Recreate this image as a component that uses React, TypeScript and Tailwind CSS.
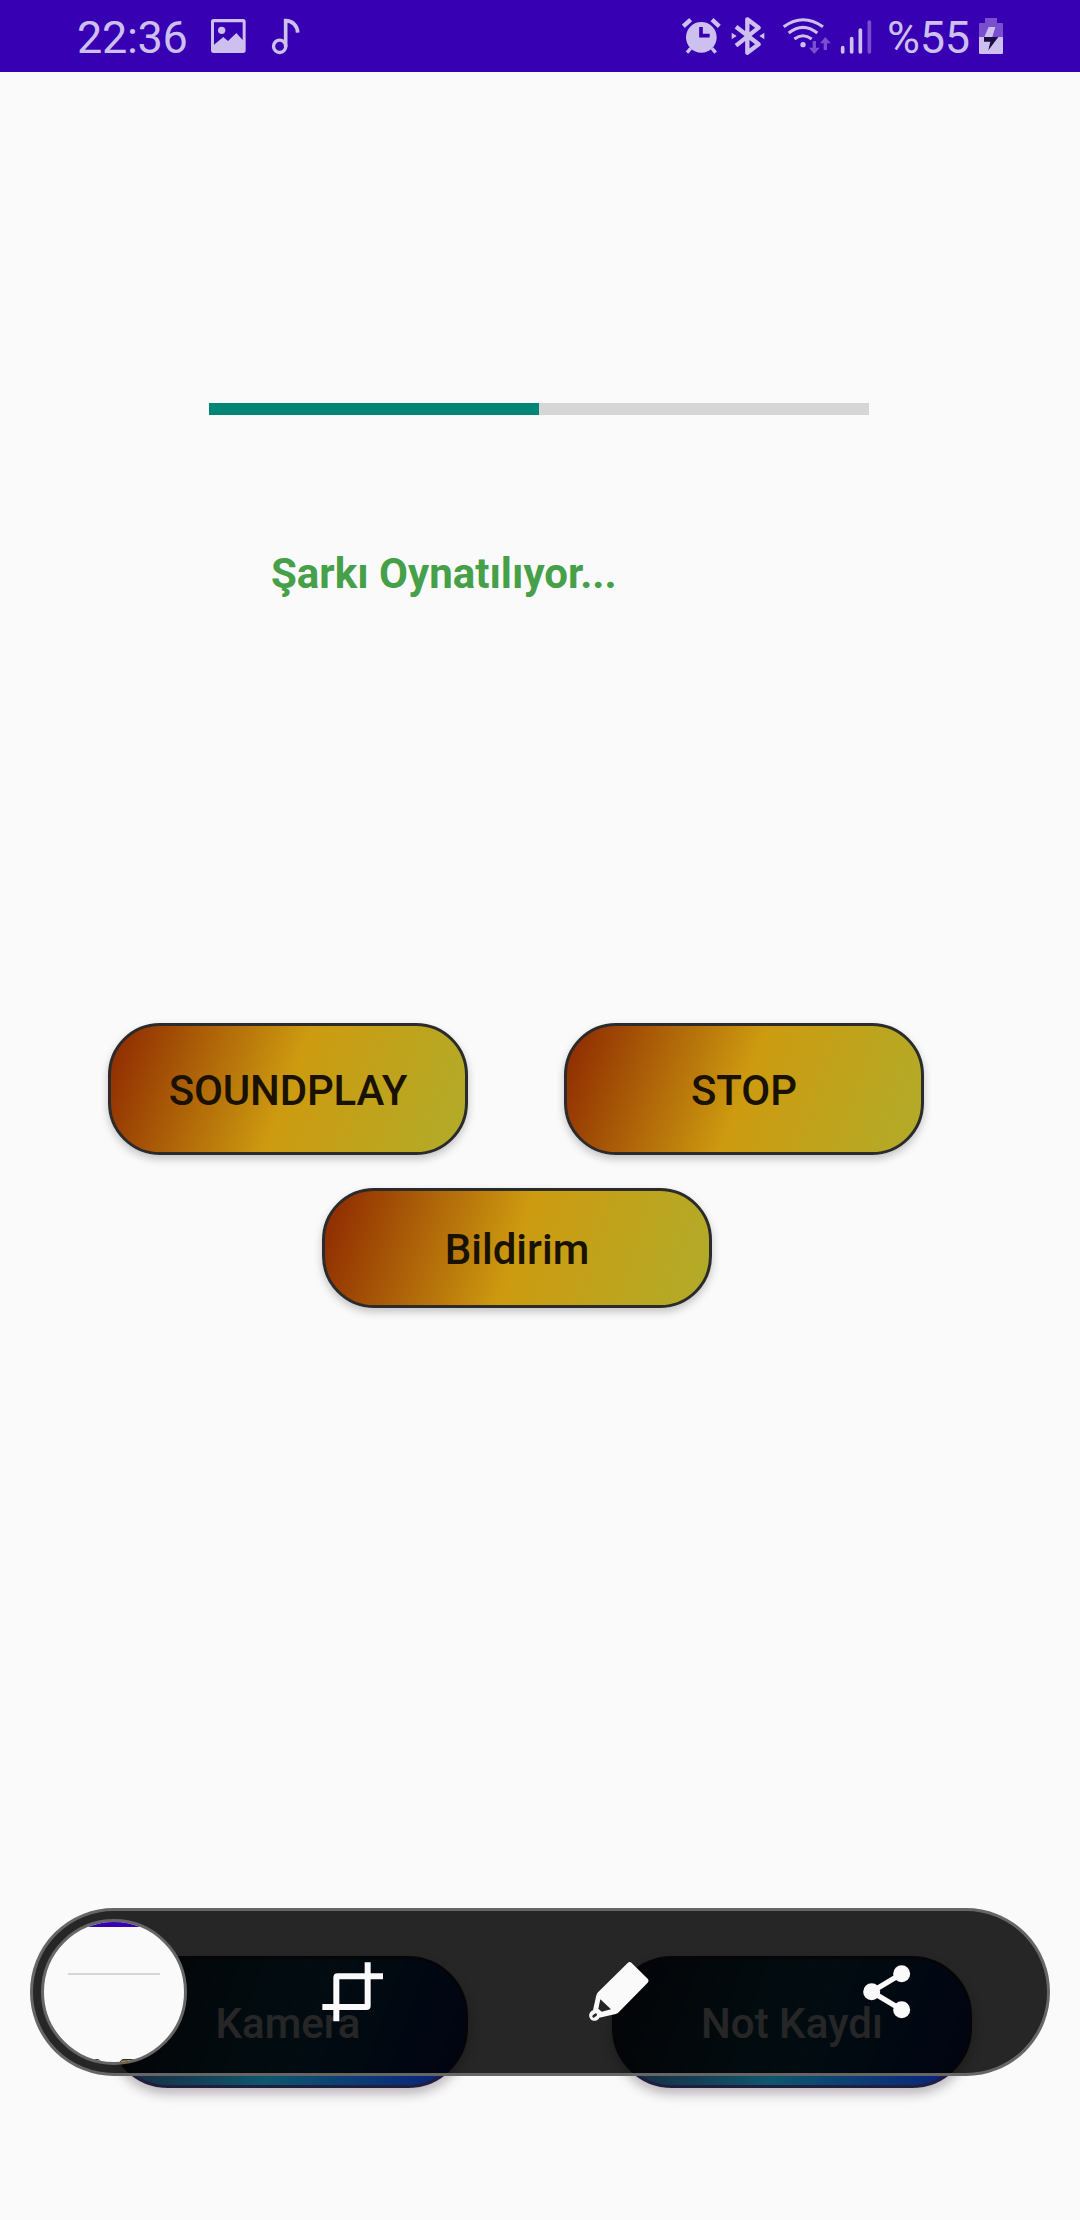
import React from "react";

const TINT = "#cdbfee";
const DIM = "#7a4fcf";

function PictureIcon() {
  return (
    <svg width="36" height="72" viewBox="450 0 108 216" fill={TINT}>
      <path
        fillRule="evenodd"
        d="M461 57h88q8 0 8 8v86q0 8-8 8h-88q-8 0-8-8V65q0-8 8-8zM462 67v67l28-23 14 12 25-24 19 21V67z"
      />
      <circle cx="485" cy="91" r="11" />
    </svg>
  );
}

function NoteIcon() {
  return (
    <svg width="29" height="72" viewBox="633 0 87 216" fill="none" stroke={TINT}>
      <circle cx="659" cy="139" r="18.500" strokeWidth="10" />
      <path d="M677 140V62C696 62 712 76 713 98" strokeWidth="11" />
    </svg>
  );
}

function AlarmIcon() {
  return (
    <svg width="39" height="72" viewBox="68 0 117 216" fill="none" stroke={TINT}>
      <circle cx="126" cy="112" r="46" fill={TINT} stroke="none" />
      <path d="M72 79l22-20M180 79l-22-20" strokeWidth="13" />
      <path d="M94 145l-11 13M158 145l11 13" strokeWidth="10" />
      <path d="M125 81v26h26" stroke="#3700b3" strokeWidth="11" />
    </svg>
  );
}

function BluetoothIcon() {
  return (
    <svg width="34" height="72" viewBox="215 0 102 216" fill="none" stroke={TINT}>
      <path
        d="M230 80l68 53-34 25V58l34 25-68 54"
        strokeWidth="13"
        strokeLinejoin="round"
      />
      <path d="M217 98l15 10-15 10zM315 98l-15 10 15 10z" fill={TINT} stroke="none" />
    </svg>
  );
}

function WifiIcon() {
  return (
    <svg width="50" height="72" viewBox="367 0 150 216" fill="none" stroke={TINT} strokeWidth="9">
      <path d="M372 80Q430 38 490 80M387 99Q430 65 473 99M404 117Q430 97 456 117" />
      <circle cx="430" cy="134" r="8" fill={TINT} stroke="none" />
      <path d="M464 123v22M497 150v-24" stroke={DIM} strokeWidth="10" />
      <path d="M448 143h32l-16 19zM481 130h32l-16-19z" fill={DIM} stroke="none" />
    </svg>
  );
}

function SignalIcon() {
  return (
    <svg width="33" height="72" viewBox="540 0 99 216" fill="none" strokeWidth="11" strokeLinecap="round">
      <path d="M548 143v13M575 116v40M601 90v66" stroke={TINT} />
      <path d="M628 66v90" stroke={DIM} />
    </svg>
  );
}

function BatteryIcon() {
  return (
    <svg width="24" height="72" viewBox="957 0 72 216">
      <path d="M975 54h36v15h15q3 0 3 3v39h-72V72q0-3 3-3h15z" fill={DIM} />
      <path d="M957 111h72v47q0 4-4 4h-64q-4 0-4-4z" fill={TINT} />
      <path d="M986 81h20l-9 30h-24z" fill={TINT} />
      <path d="M972 111h43l-30 40 6-26h-19z" fill="#1c0b45" />
    </svg>
  );
}

function StatusBar() {
  return (
    <header className="flex h-[72px] items-center bg-[#3700b3] text-[45px] leading-none tracking-[-0.3px] text-[#cdbfee]">
      <span className="ml-[77px] w-[133px] pt-[2px] whitespace-nowrap">22:36</span>
      <PictureIcon />
      <div className="w-[25px]" />
      <NoteIcon />
      <div className="grow" />
      <AlarmIcon />
      <div className="w-[10px]" />
      <BluetoothIcon />
      <div className="w-[17px]" />
      <WifiIcon />
      <div className="w-[8px]" />
      <SignalIcon />
      <span className="ml-[14px] w-[92px] pt-[2px] whitespace-nowrap">%55</span>
      <BatteryIcon />
      <div className="w-[77px]" />
    </header>
  );
}

const WARM =
  "flex items-center justify-center border-[3px] border-[#2b2b2b] rounded-[52px] bg-origin-border pt-[2px] text-[42px] font-medium text-[#1a1200] shadow-[0_4px_8px_rgba(0,0,0,0.22)]";
const COOL =
  "flex h-[132px] w-[360px] items-center justify-center border-[3px] border-[#1f1f3d] rounded-[60px] bg-origin-border pt-[2px] bg-[linear-gradient(110.1deg,#1a1a2e_0%,#0f566e_50%,#081c7c_100%)] text-[42px] font-medium text-[#fafafa] shadow-[0_6px_12px_rgba(20,0,30,0.28)]";

function Thumbnail() {
  return (
    <div className="flex h-[146px] w-[146px] flex-col items-center overflow-hidden rounded-full border-[3px] border-[#666666] bg-[#fafafa]">
      <div className="h-[5px] w-full shrink-0 bg-[#3700b3]" />
      <div className="mt-[46px] h-[2px] w-[92px] shrink-0 bg-[#d6d6d6]" />
      <div className="mt-[84px] mr-[8px] flex shrink-0 gap-[17px]">
        <div className="h-4 w-[34px] rounded-t-[5px] border border-[#2b2b2b] bg-[#b3a526]" />
        <div className="h-4 w-[34px] rounded-t-[5px] border border-[#2b2b2b] bg-[#a85c08]" />
      </div>
    </div>
  );
}

function CropIcon() {
  return (
    <svg width="62" height="60" viewBox="396 185 186 180" fill="none" stroke="#fafafa" strokeWidth="18">
      <path d="M439 363V232q0-4 4-4H579M397 320H529q4 0 4-4V186" />
    </svg>
  );
}

function PenIcon() {
  return (
    <svg width="60" height="60" viewBox="89 185 180 180">
      <path
        fillRule="evenodd"
        fill="#fafafa"
        d="M205 188q6-6 12 0l48 47q5 6 0 12l-87 89q-3 4-9 5l-49 11a16 16 0 1 1-19-22l10-45q1-5 5-9zM123 297l-6 28 10 9 28-7z"
      />
      <path d="M103 348l6-5" stroke="#252525" strokeWidth="8" strokeLinecap="round" />
    </svg>
  );
}

function ShareIcon() {
  return (
    <svg width="48" height="54" viewBox="128 224 144 162" fill="#fafafa">
      <path d="M244 250L154 304l90 54" fill="none" stroke="#fafafa" strokeWidth="16" />
      <circle cx="244" cy="250" r="25.500" />
      <circle cx="154" cy="304" r="25.500" />
      <circle cx="244" cy="358" r="25.500" />
    </svg>
  );
}

function CaptureToolbar() {
  return (
    <div className="absolute top-[1908px] left-[30px] flex h-[168px] w-[1020px] items-center rounded-full border-[3px] border-[#666666] bg-black/85 pl-[8px]">
      <Thumbnail />
      <div className="ml-[135px] flex"><CropIcon /></div>
      <div className="ml-[205px] flex"><PenIcon /></div>
      <div className="ml-[214px] flex"><ShareIcon /></div>
    </div>
  );
}

export default function App() {
  return (
    <div className="relative flex h-[2220px] w-[1080px] flex-col overflow-hidden bg-[#fafafa] font-['Roboto',sans-serif]">
      <StatusBar />
      <main className="flex flex-col">
        <div className="mt-[331px] ml-[209px] h-3 w-[660px] bg-[#d6d6d6]">
          <div className="h-full w-1/2 bg-[#018577]" />
        </div>
        <p className="mt-[134px] ml-[271px] h-[50px] text-[42px] leading-[50px] font-bold text-[#46a049]">
          Şarkı Oynatılıyor...
        </p>
        <div className="mt-[424px] ml-[108px] flex gap-24">
          <button className={`${WARM} h-[132px] w-[360px] bg-[linear-gradient(110.1deg,#8b2500_0%,#cd9b10_50%,#b0ac2a_100%)] tracking-[-0.2px]`}>
            SOUNDPLAY
          </button>
          <button className={`${WARM} h-[132px] w-[360px] bg-[linear-gradient(110.1deg,#8b2500_0%,#cd9b10_50%,#b0ac2a_100%)]`}>
            STOP
          </button>
        </div>
        <button className={`${WARM} mt-[33px] ml-[322px] h-[120px] w-[390px] bg-[linear-gradient(107.1deg,#8b2500_0%,#cd9b10_50%,#b0ac2a_100%)]`}>
          Bildirim
        </button>
        <div className="mt-[648px] ml-[108px] flex gap-36">
          <button className={COOL}>Kamera</button>
          <button className={COOL}>Not Kaydı</button>
        </div>
      </main>
      <CaptureToolbar />
    </div>
  );
}
